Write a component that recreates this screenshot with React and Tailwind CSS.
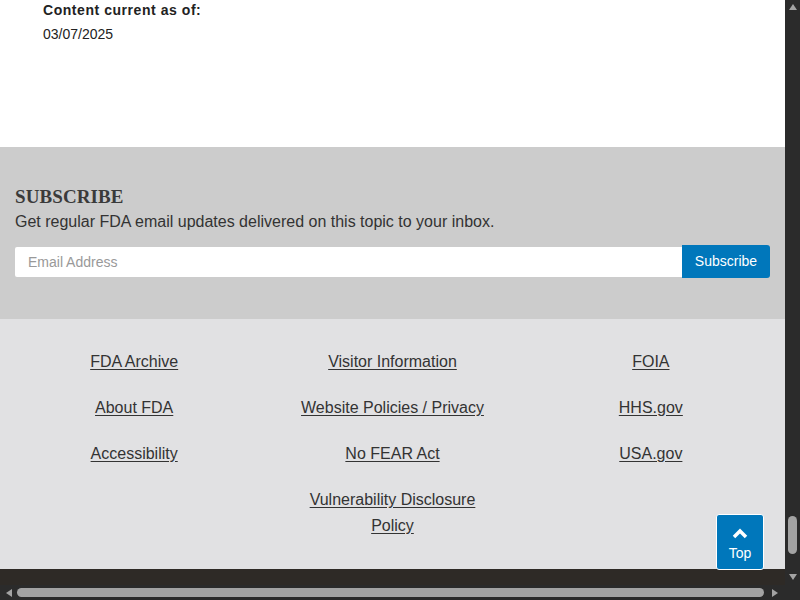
import React from 'react';

const links = [
    ['FDA Archive', 'Visitor Information', 'FOIA'],
    ['About FDA', 'Website Policies / Privacy', 'HHS.gov'],
    ['Accessibility', 'No FEAR Act', 'USA.gov'],
    [null, 'Vulnerability Disclosure Policy', null],
];

const Triangle = ({ dir }) => {
    const points = {
        up: '1,8 5,2 9,8',
        down: '1,2 9,2 5,8',
        left: '8,1 8,9 2,5',
        right: '2,1 2,9 8,5',
    }[dir];
    return (
        <svg width="10" height="10" viewBox="0 0 10 10">
            <polygon points={points} fill="#a3a3a3" />
        </svg>
    );
};

const App = () => {
    return (
        <div className="w-[800px] h-[600px] overflow-hidden flex flex-col bg-[#2b2b2b] font-['Liberation_Sans',Arial,sans-serif]">
            <div className="flex h-[585px]">
                <main className="relative w-[785px] h-[585px] flex flex-col overflow-hidden">
                    <section className="h-[147px] bg-white pl-[43px] pt-[1px] text-[#222]">
                        <p className="text-[14px] font-bold leading-[18px] tracking-[0.55px]">Content current as of:</p>
                        <p className="text-[14px] leading-[18px] mt-[6px]">03/07/2025</p>
                    </section>

                    <section className="h-[172px] bg-[#cccccc] px-[15px] pt-[38px] text-[#333]">
                        <h2 className="font-['Liberation_Serif',serif] font-bold text-[19px] leading-[24px] tracking-[0.1px] text-[#3a3a3a]">SUBSCRIBE</h2>
                        <p className="text-[16px] leading-[20px] mt-[3px]">Get regular FDA email updates delivered on this topic to your inbox.</p>
                        <div className="flex items-center mt-[13px] w-[755px]">
                            <input
                                type="text"
                                placeholder="Email Address"
                                className="flex-1 h-[30px] bg-white rounded-l-[2px] pl-[13px] text-[14px] placeholder:text-[#999] outline-none"
                            />
                            <button className="w-[88px] h-[33px] bg-[#0077bb] text-white text-[14px] rounded-r-[3px]">
                                Subscribe
                            </button>
                        </div>
                    </section>

                    <section className="h-[250px] bg-[#e1e1e3] px-[5px] pt-[30px]">
                        <div className="grid grid-cols-3 gap-y-[20px]">
                            {links.flat().map((link, i) => (
                                <div key={i} className="text-center px-[30px]">
                                    {link && (
                                        <a href="#" className="text-[16px] leading-[26px] text-[#333] underline underline-offset-[2px]">
                                            {link}
                                        </a>
                                    )}
                                </div>
                            ))}
                        </div>
                    </section>

                    <div className="h-[16px] bg-[#2e2a26]" />

                    <button className="absolute left-[716px] top-[514px] w-[48px] h-[56px] bg-[#0077bb] border border-white rounded-[3px] flex flex-col items-center pt-[12px] text-white">
                        <svg width="16" height="12" viewBox="0 0 16 12">
                            <path d="M2 10 L8 4 L14 10" stroke="white" strokeWidth="3.5" fill="none" />
                        </svg>
                        <span className="text-[14px] leading-[16px] mt-[6px]">Top</span>
                    </button>
                </main>

                <div className="w-[15px] h-[585px] bg-[#2b2b2b] flex flex-col items-center">
                    <div className="pt-[2px]"><Triangle dir="up" /></div>
                    <div className="flex-1 flex flex-col justify-end pb-[18px]">
                        <div className="w-[9px] h-[38px] rounded-full bg-[#a3a3a3]" />
                    </div>
                    <div className="pb-[3px]"><Triangle dir="down" /></div>
                </div>
            </div>

            <div className="h-[15px] flex items-center bg-[#2b2b2b]">
                <div className="w-[17px] flex justify-center"><Triangle dir="left" /></div>
                <div className="w-[747px] h-[9px] rounded-full bg-[#a3a3a3]" />
                <div className="w-[21px] flex justify-center"><Triangle dir="right" /></div>
            </div>
        </div>
    );
};

export default App;
